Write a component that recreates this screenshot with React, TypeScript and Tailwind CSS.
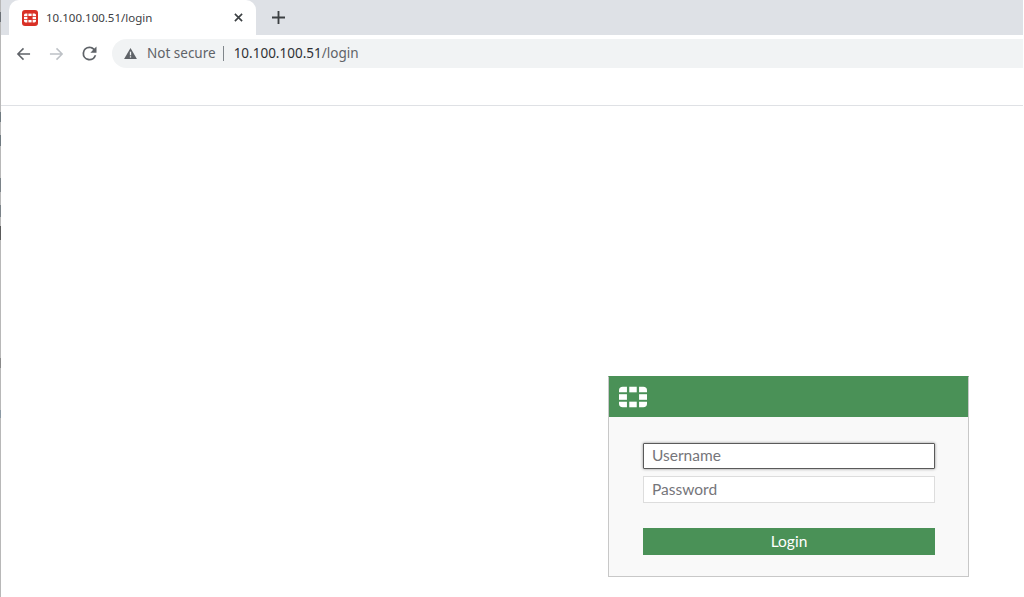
import React from "react";

function FortiMark({ className, fill }: { className?: string; fill: string }) {
  return (
    <svg viewBox="0 0 30 22" className={className} fill={fill}>
      <path d="M0 6V4a4 4 0 0 1 4-4h4.500v6z" />
      <rect x="11" y="0" width="8" height="6" />
      <path d="M21.500 0H26a4 4 0 0 1 4 4v2h-8.500z" />
      <rect x="0" y="8" width="8.500" height="6" />
      <rect x="21.500" y="8" width="8.500" height="6" />
      <path d="M0 16h8.500v6H4a4 4 0 0 1-4-4z" />
      <rect x="11" y="16" width="8" height="6" />
      <path d="M21.500 16H30v2a4 4 0 0 1-4 4h-4.500z" />
    </svg>
  );
}

const specks: [string, string][] = [
  ["mt-[12px] h-[10px]", "bg-[#6b7075]"],
  ["mt-[112px] h-[10px]", "bg-[#6f7a80]"],
  ["mt-[135px] h-[11px]", "bg-[#6f7a80]"],
  ["mt-[178px] h-[14px]", "bg-[#7a8288]"],
  ["mt-[205px] h-[12px]", "bg-[#7a8288]"],
  ["mt-[226px] h-[14px]", "bg-[#5a5a5a]"],
  ["mt-[358px] h-[10px]", "bg-[#8a8a8a]"],
  ["mt-[410px] h-[8px]", "bg-[#8c9aa4]"],
];

export default function App() {
  return (
    <div className="relative w-[1024px] h-[597px] bg-white border-l border-l-[#b8b8b8] border-r border-r-white flex flex-col font-['Open_Sans',sans-serif]">
      {specks.map(([pos, color], i) => (
        <span key={i} className={`absolute left-[-1px] top-0 w-px ${pos} ${color}`} />
      ))}
      <div className="h-[35px] bg-[#dee1e6] flex items-end shrink-0">
        <div className="ml-[8px] w-[247px] h-[35px] bg-white rounded-t-[10px] flex items-center pl-[13px] pr-[13px]">
          <div className="w-[16px] h-[16px] rounded-[3px] bg-[#d93025] flex items-center justify-center shrink-0">
            <FortiMark className="w-[12px] h-[10px]" fill="#ffffff" />
          </div>
          <span className="ml-[8px] text-[11.5px] text-[#3c4043] flex-1 font-['Noto_Sans',sans-serif]">10.100.100.51/login</span>
          <svg viewBox="0 0 10 10" className="w-[9px] h-[9px]" stroke="#3c4043" strokeWidth="1.8" fill="none">
            <path d="M1 1l8 8M9 1l-8 8" />
          </svg>
        </div>
        <svg viewBox="0 0 12 12" className="ml-[16px] mb-[11px] w-[13px] h-[13px]" stroke="#3c4043" strokeWidth="1.7" fill="none">
          <path d="M6 0v12M0 6h12" />
        </svg>
      </div>

      <div className="h-[71px] shrink-0 border-b border-b-[#dfe1e5] pt-[4px]">
        <div className="flex items-center h-[29px]">
          <svg viewBox="0 0 16 14" className="ml-[15px] w-[15px] h-[14px]" stroke="#5f6368" strokeWidth="1.6" fill="none">
            <path d="M15 7H2M8 1L2 7l6 6" />
          </svg>
          <svg viewBox="0 0 16 14" className="ml-[18px] w-[15px] h-[14px]" stroke="#bdc1c6" strokeWidth="1.6" fill="none">
            <path d="M1 7h13M8 1l6 6-6 6" />
          </svg>
          <svg viewBox="0 0 24 24" className="ml-[15px] w-[21px] h-[21px]" fill="#5f6368">
            <path d="M17.65 6.35A7.96 7.96 0 0 0 12 4a8 8 0 1 0 7.730 10h-2.080A6 6 0 1 1 12 6c1.660 0 3.140.690 4.220 1.780L13 11h7V4z" />
          </svg>
          <div className="ml-[12px] flex-1 h-[29px] bg-[#f1f3f4] rounded-l-[15px] flex items-center pl-[12px]">
            <svg viewBox="0 0 14 12" className="w-[13px] h-[11px]" fill="#5f6368">
              <path d="M7 0l7 12H0z" />
              <rect x="6.300" y="4" width="1.400" height="4" fill="#f1f3f4" />
              <rect x="6.300" y="9" width="1.400" height="1.400" fill="#f1f3f4" />
            </svg>
            <span className="ml-[10px] text-[13.5px] text-[#5f6368] font-['Noto_Sans',sans-serif]">Not secure</span>
            <span className="ml-[7px] w-px h-[15px] bg-[#80868b]" />
            <span className="ml-[10px] text-[13.5px] font-['Noto_Sans',sans-serif]">
              <span className="text-[#303134]">10.100.100.51</span>
              <span className="text-[#5f6368]">/login</span>
            </span>
          </div>
        </div>
      </div>

      <div className="ml-[607px] mt-[270px] w-[361px] h-[201px] border border-[#c8c8c8] border-t-[#4a9157] bg-[#f9f9f9] font-['Lato',sans-serif]">
        <div className="h-[40px] bg-[#4a9157] flex items-center pl-[10px]">
          <FortiMark className="w-[28px] h-[22px]" fill="#ffffff" />
        </div>
        <div className="ml-[34px] mr-[33px] mt-[26px] flex flex-col">
          <div className="h-[26px] bg-white border border-[#5a5a5a] rounded-[1px] shadow-[0_0_3px_rgba(0,0,0,0.45)] flex items-center pl-[8px] text-[15.500px] text-[#75757a]">
            Username
          </div>
          <div className="mt-[7px] h-[27px] bg-white border border-[#dddddd] flex items-center pl-[8px] text-[15.500px] text-[#75757a]">
            Password
          </div>
          <div className="mt-[25px] h-[27px] bg-[#4a9157] flex items-center justify-center text-[15.500px] text-white">
            Login
          </div>
        </div>
      </div>
    </div>
  );
}
